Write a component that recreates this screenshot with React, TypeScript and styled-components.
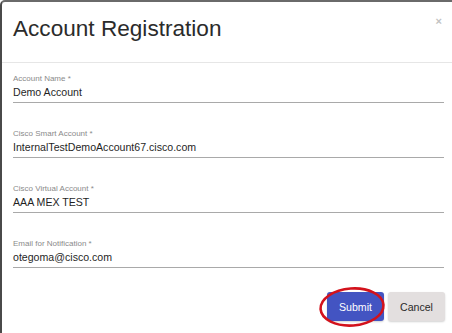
import styled, { createGlobalStyle } from 'styled-components';

const GlobalStyle = createGlobalStyle`
   html, body { margin: 0; padding: 0; background: #ffffff; }
   body { font-family: 'Liberation Sans', Arial, sans-serif; }
`;

const fields = [
   { label: 'Account Name *', value: 'Demo Account' },
   { label: 'Cisco Smart Account *', value: 'InternalTestDemoAccount67.cisco.com' },
   { label: 'Cisco Virtual Account *', value: 'AAA MEX TEST' },
   { label: 'Email for Notification *', value: 'otegoma@cisco.com' },
];

export default function App() {

   return (
      <>
         <GlobalStyle />
         <Modal>
            <Header>
               <Title>Account Registration</Title>
               <Close>×</Close>
            </Header>
            <Body>
               {fields.map(f => (
                  <Field key={f.label}>
                     <Label>{f.label}</Label>
                     <Value>{f.value}</Value>
                  </Field>
               ))}
            </Body>
            <Footer>
               <Highlight>
                  <Button $primary>Submit</Button>
                  <Ring viewBox="0 0 70 44" width="70" height="44">
                     <ellipse cx="35" cy="22" rx="31.5" ry="18.5" fill="none" stroke="#d3121c" strokeWidth="2.6" transform="rotate(-4 35 22)" />
                  </Ring>
               </Highlight>
               <Button>Cancel</Button>
            </Footer>
         </Modal>
      </>
   );

}

const Modal = styled.div`
   box-sizing: border-box;
   width: 452px;
   height: 333px;
   overflow: hidden;
   background: #ffffff;
   border-top: 2px solid #6a6a6a;
   border-left: 2px solid #4a4a4a;
   border-top-left-radius: 5px;
`;

const Header = styled.div`
   display: flex;
   justify-content: space-between;
   align-items: flex-start;
   height: 61px;
   padding: 14px 10px 0 11px;
   box-sizing: border-box;
   border-bottom: 1px solid #e6e6e6;
`;

const Title = styled.h1`
   margin: 0;
   font-size: 22.6px;
   line-height: 25px;
   font-weight: normal;
   color: #2b2b2b;
`;

const Close = styled.span`
   font-size: 11px;
   line-height: 11px;
   font-weight: bold;
   color: #c2c2c2;
   margin-top: 0px;
`;

const Body = styled.div`
   display: flex;
   flex-direction: column;
   gap: 26px;
   padding: 11px 8px 0 11px;
`;

const Field = styled.div`
   display: flex;
   flex-direction: column;
   gap: 1px;
   padding-bottom: 3px;
   border-bottom: 1px solid #a9a9a9;
`;

const Label = styled.label`
   font-size: 8px;
   line-height: 10px;
   color: #8a8a8a;
`;

const Value = styled.div`
   font-size: 10.6px;
   line-height: 14px;
   color: #1f1f1f;
`;

const Footer = styled.div`
   display: flex;
   justify-content: flex-end;
   gap: 4px;
   padding: 24px 7px 0 0;
`;

const Highlight = styled.div`
   position: relative;
   display: flex;
`;

const Button = styled.button<{ $primary?: boolean }>`
   width: 57px;
   height: 29px;
   border: none;
   border-radius: 3px;
   font-family: 'Liberation Sans', Arial, sans-serif;
   font-size: 10.6px;
   background: ${p => (p.$primary ? '#4354c2' : '#e3dfdf')};
   color: ${p => (p.$primary ? '#ffffff' : '#2a2a2a')};
   box-shadow: 0 1px 2px rgba(0, 0, 0, 0.18);
   padding: 0;
`;

const Ring = styled.svg`
   position: absolute;
   left: -10px;
   top: -7px;
   pointer-events: none;
`;
